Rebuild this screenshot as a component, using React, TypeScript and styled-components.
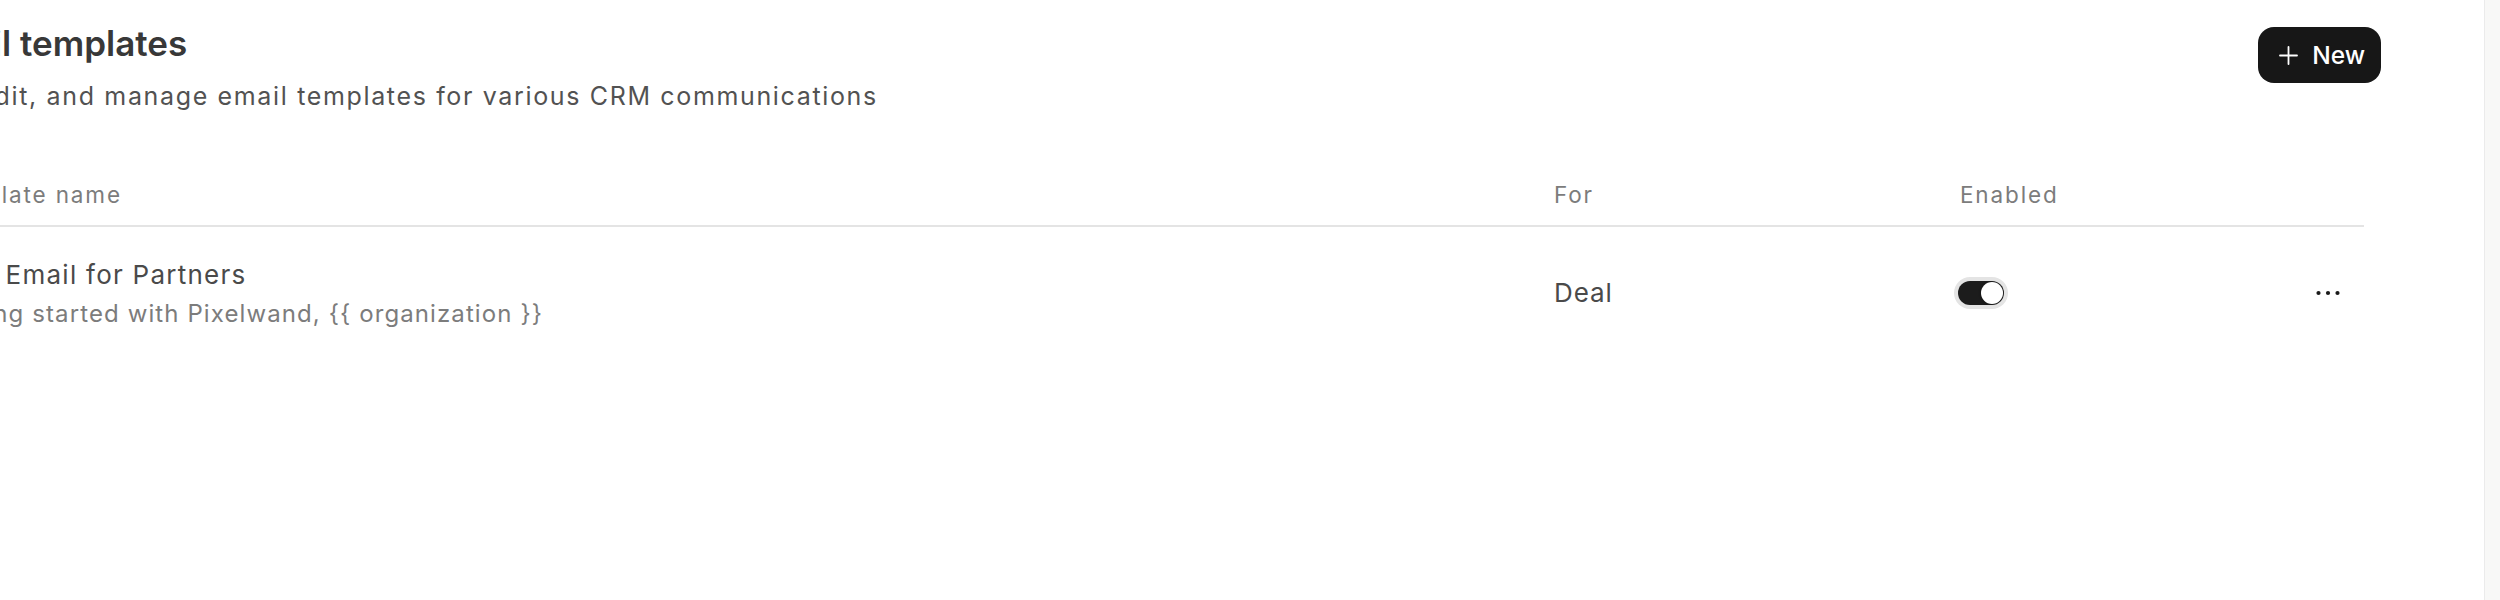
import React from 'react'
import styled, { createGlobalStyle } from 'styled-components'

const GlobalStyle = createGlobalStyle`
  html, body {
    margin: 0;
    padding: 0;
    background: #ffffff;
    font-family: Inter, "Noto Sans", sans-serif;
  }
`

const Viewport = styled.div`
  display: flex;
  width: 2500px;
  height: 600px;
  overflow: hidden;
`

const Main = styled.main`
  flex: 1;
  min-width: 0;
  overflow: hidden;
  background: #ffffff;
`

const Content = styled.div`
  margin-left: -80px;
  padding: 22px 103px 0 0;
`

const SideStrip = styled.aside`
  width: 15px;
  flex-shrink: 0;
  background: #f8f8f7;
  border-left: 1px solid #ebebeb;
`

const PageHeader = styled.header`
  display: flex;
  justify-content: space-between;
  align-items: flex-start;
`

const TitleBlock = styled.div`
  display: flex;
  flex-direction: column;
  gap: 16px;
`

const Heading = styled.h2`
  margin: 0;
  font-size: 35px;
  line-height: 42px;
  font-weight: 600;
  color: #383838;
  white-space: nowrap;
`

const Subtitle = styled.p`
  margin: 0 0 0 -12px;
  font-size: 25px;
  line-height: 32px;
  letter-spacing: 1.65px;
  color: #525252;
  white-space: nowrap;
`

const NewButton = styled.button`
  display: flex;
  align-items: center;
  gap: 14px;
  height: 56px;
  margin-top: 5px;
  padding: 0 16px 0 21px;
  border: none;
  border-radius: 16px;
  background: #171717;
  color: #ffffff;
  font-family: inherit;
  font-size: 24.5px;
  font-weight: 500;
  cursor: pointer;
`

const Table = styled.div`
  margin: 69px 17px 0 15px;
`

const Row = styled.div<{ $head?: boolean }>`
  display: grid;
  grid-template-columns: 1619px 406px 320px 1fr;
  align-items: center;
  padding: ${(p) => (p.$head ? '0 0 16px' : '28px 0')};
  border-bottom: ${(p) => (p.$head ? '2px solid #e4e4e4' : 'none')};
`

const HeadCell = styled.div`
  font-size: 22.5px;
  line-height: 28px;
  letter-spacing: 1.85px;
  color: #7c7c7c;
`

const NameCell = styled.div`
  display: flex;
  flex-direction: column;
  gap: 6px;
  margin-top: 3px;
  white-space: nowrap;
`

const Name = styled.span`
  font-size: 26px;
  line-height: 34px;
  letter-spacing: 1.25px;
  color: #4a4a4a;
`

const Subject = styled.span`
  font-size: 24px;
  line-height: 32px;
  letter-spacing: 1.1px;
  color: #7c7c7c;
`

const TextCell = styled.div`
  font-size: 26px;
  line-height: 34px;
  letter-spacing: 0.9px;
  color: #4a4a4a;
`

const Switch = styled.span<{ $on?: boolean }>`
  position: relative;
  display: block;
  width: 46px;
  height: 24px;
  margin-left: -2px;
  border-radius: 12px;
  background: ${(p) => (p.$on ? '#1c1c1c' : '#e2e2e2')};
  box-shadow: 0 0 0 4px #e4e4e4;
`

const Thumb = styled.span<{ $on?: boolean }>`
  position: absolute;
  top: 1px;
  left: ${(p) => (p.$on ? '23px' : '1px')};
  width: 22px;
  height: 22px;
  border-radius: 50%;
  background: #ffffff;
  box-shadow: -1px 0 2px rgba(0, 0, 0, 0.25);
`

const ActionCell = styled.div`
  display: flex;
  justify-content: flex-end;
`

const IconButton = styled.button`
  display: flex;
  align-items: center;
  justify-content: center;
  width: 48px;
  height: 48px;
  margin-right: 12px;
  padding: 0;
  border: none;
  background: transparent;
  color: #1a1a1a;
  cursor: pointer;
`

function PlusIcon() {
  return (
    <svg width="19" height="19" viewBox="0 0 19 19" fill="none" stroke="currentColor" strokeWidth="1.8" strokeLinecap="round">
      <path d="M9.5 1v17M1 9.5h17" />
    </svg>
  )
}

function DotsIcon() {
  return (
    <svg width="24" height="6" viewBox="0 0 24 6" fill="currentColor">
      <circle cx="2.5" cy="3" r="2.1" />
      <circle cx="12" cy="3" r="2.1" />
      <circle cx="21.5" cy="3" r="2.1" />
    </svg>
  )
}

const templates = [
  {
    name: 'Intro Email for Partners',
    subject: 'Getting started with Pixelwand, {{ organization }}',
    reference: 'Deal',
    enabled: true,
  },
]

export default function App() {
  return (
    <>
      <GlobalStyle />
      <Viewport>
        <Main>
          <Content>
            <PageHeader>
              <TitleBlock>
                <Heading>Email templates</Heading>
                <Subtitle>Add, edit, and manage email templates for various CRM communications</Subtitle>
              </TitleBlock>
              <NewButton>
                <PlusIcon />
                New
              </NewButton>
            </PageHeader>

            <Table>
              <Row $head>
                <HeadCell>Template name</HeadCell>
                <HeadCell>For</HeadCell>
                <HeadCell>Enabled</HeadCell>
                <HeadCell />
              </Row>
              {templates.map((t) => (
                <Row key={t.name}>
                  <NameCell>
                    <Name>{t.name}</Name>
                    <Subject>{t.subject}</Subject>
                  </NameCell>
                  <TextCell>{t.reference}</TextCell>
                  <div>
                    <Switch $on={t.enabled}>
                      <Thumb $on={t.enabled} />
                    </Switch>
                  </div>
                  <ActionCell>
                    <IconButton aria-label="More">
                      <DotsIcon />
                    </IconButton>
                  </ActionCell>
                </Row>
              ))}
            </Table>
          </Content>
        </Main>
        <SideStrip />
      </Viewport>
    </>
  )
}
